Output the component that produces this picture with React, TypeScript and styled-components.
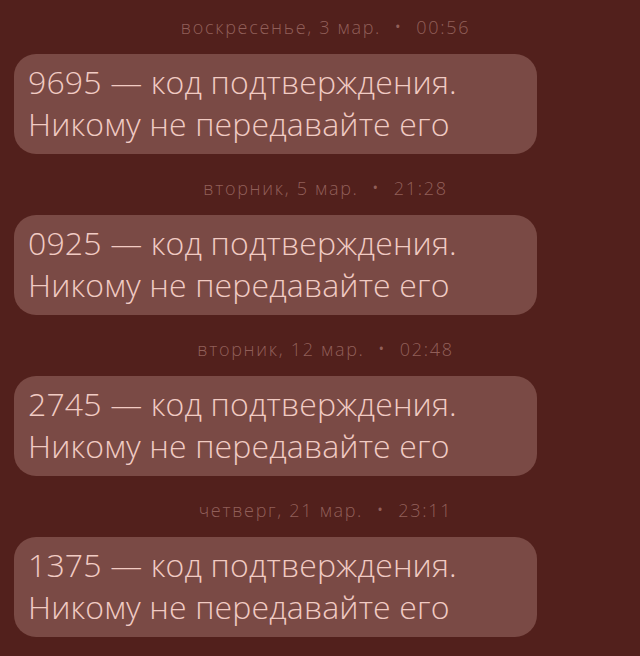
import React from "react";
import styled, { createGlobalStyle } from "styled-components";

const Global = createGlobalStyle`
  html, body { margin: 0; padding: 0; background: #52201c; }
  body { width: 640px; height: 656px; overflow: hidden; }
`;

const Page = styled.div`
  width: 640px;
  height: 656px;
  background: #52201c;
  display: flex;
  flex-direction: column;
  padding: 15px 0 0 14px;
  box-sizing: border-box;
`;

const Group = styled.div`
  display: flex;
  flex-direction: column;
  gap: 15px;
  margin-bottom: 22px;
`;

const Stamp = styled.div`
  width: 523px;
  height: 24px;
  text-align: center;
  padding-left: 100px;
  box-sizing: border-box;
  font-family: "Open Sans", Roboto, sans-serif;
  font-weight: 300;
  font-size: 18px;
  letter-spacing: 1.7px;
  line-height: 24px;
  color: #92605a;
  color: #915f59;
  white-space: nowrap;
`;

const Dot = styled.span`
  margin: 0 13px;
  font-size: 20px;
`;

const Bubble = styled.div`
  width: 523px;
  height: 100px;
  box-sizing: border-box;
  padding: 7px 14px;
  background: #7a4a45;
  border-radius: 22px;
  font-family: "Open Sans", Roboto, sans-serif;
  font-weight: 300;
  font-size: 32px;
  line-height: 42px;
  letter-spacing: 0.15px;
  color: #f1cbc3;
`;

const Line = styled.div`
  white-space: nowrap;
`;

const messages = [
  { day: "воскресенье, 3 мар.", time: "00:56", code: "9695" },
  { day: "вторник, 5 мар.", time: "21:28", code: "0925" },
  { day: "вторник, 12 мар.", time: "02:48", code: "2745" },
  { day: "четверг, 21 мар.", time: "23:11", code: "1375" },
];

export default function App() {
  return (
    <>
      <Global />
      <Page>
        {messages.map((m) => (
          <Group key={m.code}>
            <Stamp>
              {m.day}
              <Dot>•</Dot>
              {m.time}
            </Stamp>
            <Bubble>
              <Line>{m.code} — код подтверждения.</Line>
              <Line>Никому не передавайте его</Line>
            </Bubble>
          </Group>
        ))}
      </Page>
    </>
  );
}
